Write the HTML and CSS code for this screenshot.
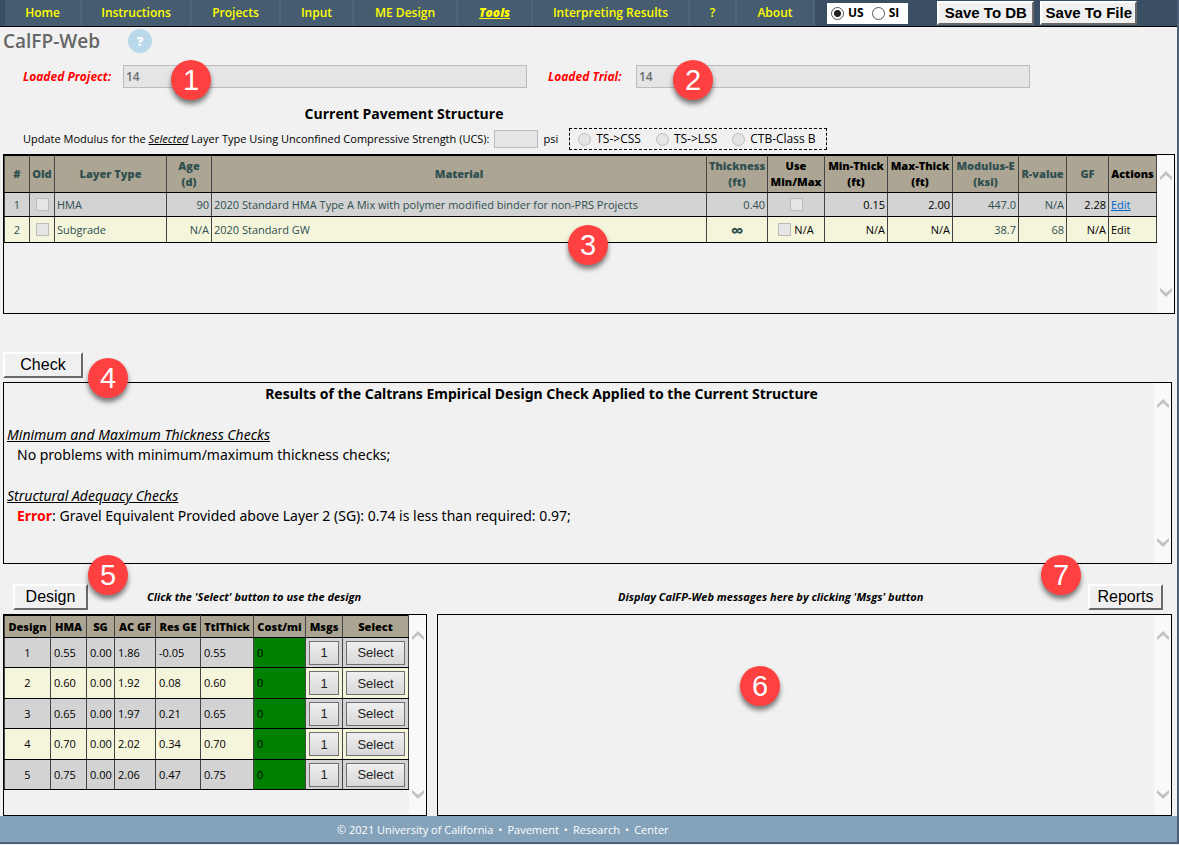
FILE: index.html
```html
<!DOCTYPE html>
<html lang="en">
<head>
<meta charset="utf-8">
<title>CalFP-Web</title>
<link rel="stylesheet" href="styles.css">
</head>
<body>
<svg class="defs" aria-hidden="true">
  <symbol id="up" viewBox="0 0 12 10"><path d="M0 9V6L6 0l6 6v3L6 4z"/></symbol>
  <symbol id="down" viewBox="0 0 12 10"><path d="M0 1v3l6 6 6-6V1L6 6z"/></symbol>
</svg>
<div class="page">
  <header class="topbar">
    <nav class="menu">
      <a href="#">Home</a><a href="#">Instructions</a><a href="#">Projects</a><a href="#">Input</a><a href="#">ME Design</a><a href="#" class="current">Tools</a><a href="#">Interpreting Results</a><a href="#">?</a><a href="#">About</a>
    </nav>
    <div class="units">
      <label><input type="radio" name="units" checked>US</label>
      <label><input type="radio" name="units">SI</label>
    </div>
    <div class="saves">
      <button class="btn save">Save To DB</button>
      <button class="btn save">Save To File</button>
    </div>
  </header>

  <main>
    <div class="title">
      <h1>CalFP-Web</h1>
      <button class="help" aria-label="Help">?</button>
    </div>

    <div class="loaded">
      <label for="project">Loaded Project:</label>
      <div class="field"><input id="project" type="text" value="14" disabled><span class="callout c1">1</span></div>
      <label for="trial">Loaded Trial:</label>
      <div class="field"><input id="trial" type="text" value="14" disabled><span class="callout c2">2</span></div>
    </div>

    <h2 class="structure-title">Current Pavement Structure</h2>

    <div class="modulus">
      <label for="ucs">Update Modulus for the <em>Selected</em> Layer Type Using Unconfined Compressive Strength (UCS):</label>
      <input id="ucs" type="text" disabled>
      <span class="psi">psi</span>
      <div class="layer-kinds">
        <label><input type="radio" name="kind" disabled>TS-&gt;CSS</label>
        <label><input type="radio" name="kind" disabled>TS-&gt;LSS</label>
        <label><input type="radio" name="kind" disabled>CTB-Class B</label>
      </div>
    </div>

    <section class="panel structure">
      <div class="content">
        <table class="grid layers">
          <colgroup><col class="w25"><col class="w25"><col class="w112"><col class="w45"><col><col class="w61"><col class="w57"><col class="w63"><col class="w65"><col class="w66"><col class="w48"><col class="w42"><col class="w48"></colgroup>
          <thead><tr>
            <th>#</th><th>Old</th><th>Layer Type</th><th>Age<br>(d)</th><th>Material</th><th>Thickness<br>(ft)</th><th class="k">Use<br>Min/Max</th><th class="k">Min-Thick<br>(ft)</th><th class="k">Max-Thick<br>(ft)</th><th>Modulus-E<br>(ksi)</th><th>R-value</th><th>GF</th><th class="k">Actions</th>
          </tr></thead>
          <tbody>
            <tr><td class="mid">1</td><td class="mid"><input type="checkbox" aria-label="Old layer 1" disabled></td><td>HMA</td><td class="num">90</td><td>2020 Standard HMA Type A Mix with polymer modified binder for non-PRS Projects</td><td class="num">0.40</td><td class="mid k"><input type="checkbox" aria-label="Use min/max layer 1" disabled></td><td class="num k">0.15</td><td class="num k">2.00</td><td class="num">447.0</td><td class="num">N/A</td><td class="num k">2.28</td><td><a href="#">Edit</a></td></tr>
            <tr><td class="mid">2</td><td class="mid"><input type="checkbox" aria-label="Old layer 2" disabled></td><td>Subgrade</td><td class="num">N/A</td><td>2020 Standard GW</td><td class="mid inf">∞</td><td class="mid k"><label><input type="checkbox" disabled> N/A</label></td><td class="num k">N/A</td><td class="num k">N/A</td><td class="num">38.7</td><td class="num">68</td><td class="num k">N/A</td><td class="k">Edit</td></tr>
          </tbody>
        </table>
      </div>
      <div class="scroll" aria-hidden="true"><svg><use href="#up"/></svg><svg><use href="#down"/></svg></div>
      <span class="callout c3">3</span>
    </section>

    <div class="check-row">
      <button class="btn check">Check</button>
      <span class="callout c4">4</span>
    </div>

    <section class="panel results">
      <div class="content">
        <h2>Results of the Caltrans Empirical Design Check Applied to the Current Structure</h2>
        <h3>Minimum and Maximum Thickness Checks</h3>
        <p>No problems with minimum/maximum thickness checks;</p>
        <h3>Structural Adequacy Checks</h3>
        <p><strong>Error</strong>: Gravel Equivalent Provided above Layer 2 (SG): 0.74 is less than required: 0.97;</p>
      </div>
      <div class="scroll" aria-hidden="true"><svg><use href="#up"/></svg><svg><use href="#down"/></svg></div>
    </section>

    <div class="lower">
      <section class="designs">
        <div class="bar">
          <button class="btn design">Design</button>
          <p>Click the 'Select' button to use the design</p>
          <span class="callout c5">5</span>
        </div>
        <div class="panel">
          <div class="content">
            <table class="grid options">
              <colgroup><col class="w46"><col class="w36"><col class="w28"><col class="w41"><col class="w45"><col class="w53"><col class="w52"><col class="w37"><col class="w66"></colgroup>
              <thead><tr><th>Design</th><th>HMA</th><th>SG</th><th>AC GF</th><th>Res GE</th><th>TtlThick</th><th>Cost/mi</th><th>Msgs</th><th>Select</th></tr></thead>
              <tbody>
                <tr><td class="mid">1</td><td>0.55</td><td>0.00</td><td>1.86</td><td>-0.05</td><td>0.55</td><td class="cost">0</td><td class="act"><button>1</button></td><td class="act"><button>Select</button></td></tr>
                <tr><td class="mid">2</td><td>0.60</td><td>0.00</td><td>1.92</td><td>0.08</td><td>0.60</td><td class="cost">0</td><td class="act"><button>1</button></td><td class="act"><button>Select</button></td></tr>
                <tr><td class="mid">3</td><td>0.65</td><td>0.00</td><td>1.97</td><td>0.21</td><td>0.65</td><td class="cost">0</td><td class="act"><button>1</button></td><td class="act"><button>Select</button></td></tr>
                <tr><td class="mid">4</td><td>0.70</td><td>0.00</td><td>2.02</td><td>0.34</td><td>0.70</td><td class="cost">0</td><td class="act"><button>1</button></td><td class="act"><button>Select</button></td></tr>
                <tr><td class="mid">5</td><td>0.75</td><td>0.00</td><td>2.06</td><td>0.47</td><td>0.75</td><td class="cost">0</td><td class="act"><button>1</button></td><td class="act"><button>Select</button></td></tr>
              </tbody>
            </table>
          </div>
          <div class="scroll" aria-hidden="true"><svg><use href="#up"/></svg><svg><use href="#down"/></svg></div>
        </div>
      </section>
      <section class="messages">
        <div class="bar">
          <p>Display CalFP-Web messages here by clicking 'Msgs' button</p>
          <span class="callout c7">7</span>
          <button class="btn reports">Reports</button>
        </div>
        <div class="panel">
          <div class="content"></div>
          <div class="scroll" aria-hidden="true"><svg><use href="#up"/></svg><svg><use href="#down"/></svg></div>
          <span class="callout c6">6</span>
        </div>
      </section>
    </div>
  </main>

  <footer><span>© 2021 University of California</span><span>•</span><span>Pavement</span><span>•</span><span>Research</span><span>•</span><span>Center</span></footer>
</div>
</body>
</html>
```
FILE: styles.css
```css
* { box-sizing: border-box; }
body { margin: 0; background: #f1f1f1; color: #000; font: 12px/16px "Open Sans", "Noto Sans", sans-serif; }
h1, h2, h3, p { margin: 0; }
.defs { display: none; }
.page { border-right: 2px solid #4b6078; border-bottom: 2px solid #4b6078; }

.topbar { display: flex; align-items: center; height: 27px; padding-left: 5px; background: #3a4f63; border-bottom: 1px solid #000; }
.menu { display: grid; grid-template-columns: 77px 110px 89px 73px 104px 75px 157px 47px 78px; align-self: stretch; }
.menu a { display: flex; align-items: center; justify-content: center; background: #465c71; border-right: 2px solid #4e667d; color: #ff0; font-weight: 600; text-decoration: none; }
.menu a.current { font-weight: 800; font-style: italic; text-decoration: underline; }
.units { display: flex; gap: 8px; align-items: center; height: 21px; margin-left: 12px; padding: 0 9px 0 4px; background: #fff; font-weight: 700; }
.units label { display: flex; align-items: center; gap: 4px; }
input[type="radio"] { appearance: none; width: 13px; height: 13px; margin: 0; border: 1px solid #555; border-radius: 50%; background: #fff; }
input[type="radio"]:checked { background: radial-gradient(circle, #222 0 3px, #fff 4px); }
input[type="radio"]:disabled { border-color: #bcbcbc; background: #e5e5e5; }
.saves { display: flex; gap: 6px; margin-left: 29px; }

.btn { border: 2px solid; border-color: #fff #696969 #696969 #fff; background: #f0f0f0; color: #000; padding: 0; font: 16px/20px "Liberation Sans", Arial, sans-serif; height: 26px; white-space: nowrap; }
.btn.save { width: 97px; height: 24px; font-size: 15px; font-weight: 700; }
.btn.check { width: 80px; }
.btn.design, .btn.reports { width: 75px; }

.title { display: flex; align-items: center; gap: 28px; height: 27px; padding-left: 3px; }
h1 { color: #666; font-size: 19px; font-weight: 600; line-height: 24px; }
.help { width: 24px; height: 24px; padding: 0; border: 0; border-radius: 50%; background: #b9d9ea; color: #fff; font: 800 13px/24px "Open Sans", sans-serif; }

.loaded { display: grid; grid-template-columns: 100px minmax(0, 404px) 109px minmax(0, 394px); padding: 11px 0 0 23px; }
.loaded label { color: #f00; font-style: italic; font-weight: 700; line-height: 23px; }
.loaded label:nth-of-type(2) { padding-left: 21px; }
.field { position: relative; }
input[type="text"] { display: block; width: 100%; height: 23px; padding: 0 2px; border: 1px solid #bcbcbc; background: #e5e5e5; color: #6d6d6d; font: 600 12px "Open Sans", sans-serif; }
.structure-title { width: 808px; margin-top: 16px; text-align: center; font-size: 14px; line-height: 20px; }

.modulus { display: flex; align-items: center; height: 22px; margin: 4px 0; padding-left: 23px; font-size: 11px; white-space: nowrap; }
.modulus em { text-decoration: underline; }
.modulus > input[type="text"] { width: 44px; height: 18px; margin: 0 6px 0 4px; }
.layer-kinds { display: flex; gap: 15px; margin-left: 11px; padding: 0 10px 0 8px; height: 22px; align-items: center; border: 1px dashed #000; font-size: 12px; }
.layer-kinds label { display: flex; align-items: center; gap: 5px; }

.panel { position: relative; display: flex; border: 1px solid #000; }
.content { flex: 1; min-width: 0; }
.scroll { display: flex; flex-direction: column; justify-content: space-between; align-items: center; width: 17px; padding: 16px 0; background: #f9f9f9; }
.scroll svg { width: 12px; height: 10px; fill: #c1c1c1; }
.structure { min-height: 160px; margin: 0 2px 0 3px; }
.results { min-height: 182px; margin: 0 5px 0 3px; }

.grid { width: 100%; table-layout: fixed; border-collapse: collapse; white-space: nowrap; }
.grid th, .grid td { border: 1px solid #000; border-left-color: #444; border-right-color: #444; padding: 0 2px; }
.grid th { background: #aca593; font-size: 11px; font-weight: 800; padding: 0; }
.grid td { font-size: 11px; }
.grid tbody tr:nth-child(odd) { background: #d3d3d3; }
.grid tbody tr:nth-child(even) { background: #f5f5dc; }
.layers th, .layers td { color: #2f4f4f; }
.layers .k { color: #000; }
.layers thead tr { height: 37px; }
.layers tbody tr { height: 24px; }
.layers tbody tr:nth-child(even) { height: 26px; }
.grid .mid { text-align: center; }
.grid .num { text-align: right; }
.grid .inf { font-size: 18px; font-weight: 700; }
.grid a { color: #0066cc; }
.layers label { display: flex; align-items: center; justify-content: center; gap: 3px; }
input[type="checkbox"] { appearance: none; display: block; width: 13px; height: 13px; margin: 0 auto; border: 1px solid #bcbcbc; background: #e5e5e5; }
label input[type="checkbox"] { margin: 0; }
.w25 { width: 25px; } .w28 { width: 28px; } .w36 { width: 36px; } .w37 { width: 37px; }
.w41 { width: 41px; } .w42 { width: 42px; } .w45 { width: 45px; } .w46 { width: 46px; } .w48 { width: 48px; }
.w52 { width: 52px; } .w53 { width: 53px; } .w57 { width: 57px; } .w61 { width: 61px; } .w63 { width: 63px; }
.w65 { width: 65px; } .w66 { width: 66px; } .w112 { width: 112px; }

.check-row { position: relative; padding: 38px 0 4px 3px; }
.check-row .btn { display: block; }

.results .content { padding: 1px 3px; font-family: "Noto Sans", "Open Sans", sans-serif; font-size: 14px; line-height: 20px; }
.results h2 { padding-right: 75px; text-align: center; font-size: 14px; line-height: 20px; }
.results h3 { margin-top: 21px; font-size: 14px; font-weight: 400; font-style: italic; text-decoration: underline; }
.results p { padding-left: 10px; }
.results strong { color: #f00; }

.lower { display: grid; grid-template-columns: 424px 1fr; gap: 10px; margin: 0 5px 0 3px; padding-top: 20px; }
.designs, .messages { display: flex; flex-direction: column; }
.bar { position: relative; display: flex; align-items: flex-start; height: 30px; font-size: 11px; font-style: italic; font-weight: 700; }
.bar p { line-height: 26px; }
.designs .bar { gap: 59px; padding-left: 10px; }
.messages .bar { justify-content: space-between; padding: 0 9px 0 181px; }
.lower .panel { flex: 1; min-height: 202px; }
.options thead tr { height: 22px; }
.options tbody tr { height: 30px; }
.options tbody tr:nth-child(even) { height: 31px; }
.options td { padding: 0 3px; }
.options .cost { background: #008000; }
.options .act { padding: 0 3px; }
.options button { display: block; width: 100%; height: 24px; padding: 0; border: 1px solid #707070; background: linear-gradient(#efefef, #d8d8d8); color: #222; font: 13px "Liberation Sans", Arial, sans-serif; }

.callout { position: absolute; z-index: 1; width: 40px; height: 40px; border-radius: 50%; background: #ff4040; color: #fff; box-shadow: 0 4px 5px rgba(0, 0, 0, .5); font: 29px/41px "Liberation Sans", Arial, sans-serif; text-align: center; }
.c1 { left: 48px; top: -5px; }
.c2 { left: 37px; top: -5px; }
.c3 { left: 564px; top: 70px; }
.c4 { left: 88px; top: 44px; }
.c5 { left: 85px; top: -29px; }
.c6 { left: 302px; top: 51px; }
.c7 { right: 91px; top: -29px; }

footer { display: flex; gap: 5px; height: 26px; padding-left: 337px; background: #84a2ba; color: #fff; font-size: 11px; line-height: 27px; white-space: nowrap; }
```
